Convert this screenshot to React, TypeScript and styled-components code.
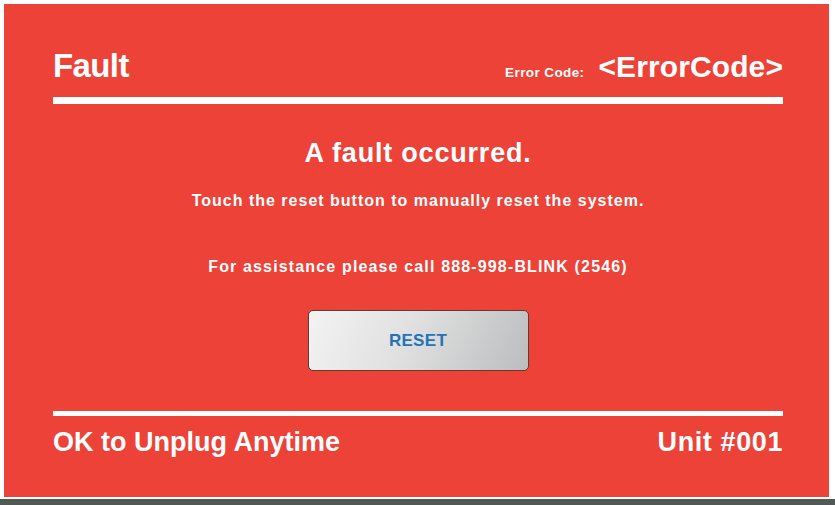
import styled, { createGlobalStyle } from "styled-components";

const GlobalStyle = createGlobalStyle`
    html, body {
        margin: 0;
        padding: 0;
        background: #ffffff;
        font-family: "Liberation Sans", Arial, sans-serif;
    }
    * {
        box-sizing: border-box;
    }
`

const App = () => {
    return (
        <Page>
            <GlobalStyle />
            <Panel>
                <Header>
                    <Title>Fault</Title>
                    <ErrorBox>
                        <ErrorLabel>Error Code:</ErrorLabel>
                        <ErrorValue>&lt;ErrorCode&gt;</ErrorValue>
                    </ErrorBox>
                </Header>
                <Rule thick={7} gap={15} />
                <Message>A fault occurred.</Message>
                <Note gap={26} spacing={1}>Touch the reset button to manually reset the system.</Note>
                <Note gap={50} spacing={1.15}>For assistance please call 888-998-BLINK (2546)</Note>
                <ResetButton>RESET</ResetButton>
                <Rule thick={5} gap={40} />
                <Footer>
                    <FooterText>OK to Unplug Anytime</FooterText>
                    <FooterText className="unit">Unit #001</FooterText>
                </Footer>
            </Panel>
            <BottomBar />
        </Page>
    )
}

const Page = styled.div`
    width: 835px;
    height: 505px;
    display: flex;
    flex-direction: column;
    padding-top: 4px;
    overflow: hidden;
`
const Panel = styled.div`
    width: 825px;
    height: 493px;
    margin-left: 4px;
    background-color: #ec4237;
    color: #ffffff;
    display: flex;
    flex-direction: column;
    padding: 45px 46px 0 49px;
    font-weight: 700;
`
const Header = styled.div`
    display: flex;
    justify-content: space-between;
    align-items: baseline;
    line-height: 1;
`
const Title = styled.span`
    font-size: 33px;
    letter-spacing: -0.6px;
`
const ErrorBox = styled.div`
    display: flex;
    align-items: baseline;
    gap: 14px;
`
const ErrorLabel = styled.span`
    font-size: 13.5px;
    letter-spacing: 0.4px;
`
const ErrorValue = styled.span`
    font-size: 30px;
    letter-spacing: 0.1px;
`
const Rule = styled.div<{ thick: number; gap: number }>`
    height: ${p => p.thick}px;
    margin-top: ${p => p.gap}px;
    background-color: #ffffff;
    flex-shrink: 0;
`
const Message = styled.div`
    margin-top: 36px;
    text-align: center;
    font-size: 27px;
    line-height: 1;
    letter-spacing: 0.8px;
`
const Note = styled.div<{ gap: number; spacing: number }>`
    margin-top: ${p => p.gap}px;
    text-align: center;
    font-size: 16px;
    line-height: 1;
    letter-spacing: ${p => p.spacing}px;
`
const ResetButton = styled.button`
    align-self: center;
    margin-top: 35px;
    width: 221px;
    height: 61px;
    flex-shrink: 0;
    border: 1.5px solid #5e3b35;
    border-radius: 5px;
    background: linear-gradient(115deg, #f3f3f3 0%, #e0e0e0 45%, #bbbdbe 100%);
    color: #2572b8;
    font-family: "Liberation Sans", Arial, sans-serif;
    font-weight: 700;
    font-size: 17px;
    letter-spacing: 0.3px;
    cursor: pointer;
`
const Footer = styled.div`
    margin-top: 13px;
    display: flex;
    justify-content: space-between;
    line-height: 1;
`
const FooterText = styled.span`
    font-size: 27px;
    &.unit{
        letter-spacing: 0.6px;
    }
`
const BottomBar = styled.div`
    margin-top: 2px;
    height: 6px;
    background-color: #4f5955;
`

export default App;
